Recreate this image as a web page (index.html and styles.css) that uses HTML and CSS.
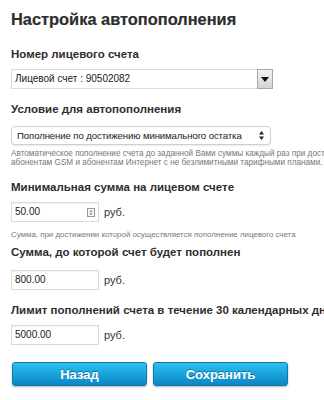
FILE: index.html
```html
<!DOCTYPE html>
<html lang="ru">
<head>
<meta charset="utf-8">
<title>Настройка автопополнения</title>
<link rel="stylesheet" href="styles.css">
</head>
<body>
<div class="page">
  <h1 class="title">Настройка автопополнения</h1>

  <h2 class="label first">Номер лицевого счета</h2>
  <div class="select-box">
    <span class="select-value">Лицевой счет : 90502082</span>
    <span class="select-btn"><svg width="8" height="5" viewBox="0 0 8 5"><path d="M0 0h8L4 5z" fill="#111"/></svg></span>
  </div>

  <h2 class="label">Условие для автопополнения</h2>
  <div class="select-round">
    <span class="select-value2">Пополнение по достижению минимального остатка</span>
    <svg class="updown" width="5" height="9" viewBox="0 0 5 9"><path d="M2.5 0L5 3.5H0z M2.5 9L0 5.5h5z" fill="#222"/></svg>
  </div>
  <p class="note"><span>Автоматическое пополнение счета до заданной Вами суммы каждый раз при достижении</span><span>абонентам GSM и абонентам Интернет с не безлимитными тарифными планами.</span></p>

  <h2 class="label after-note">Минимальная сумма на лицевом счете</h2>
  <div class="field">
    <div class="input">50.00<svg class="spin" width="8" height="9" viewBox="0 0 8 9"><rect x="0.5" y="0.5" width="7" height="8" fill="#f4f4f4" stroke="#999"/><path d="M4 2L5.5 3.8h-3z M4 7L2.5 5.2h3z" fill="#777"/></svg></div>
    <span class="unit">руб.</span>
  </div>
  <p class="hint">Сумма, при достижении которой осуществляется пополнение лицевого счета</p>

  <h2 class="label after-hint">Сумма, до которой счет будет пополнен</h2>
  <div class="field">
    <div class="input">800.00</div>
    <span class="unit">руб.</span>
  </div>

  <h2 class="label">Лимит пополнений счета в течение 30 календарных дней</h2>
  <div class="field">
    <div class="input">5000.00</div>
    <span class="unit">руб.</span>
  </div>

  <div class="buttons">
    <button class="btn">Назад</button>
    <button class="btn">Сохранить</button>
  </div>
</div>
</body>
</html>
```
FILE: styles.css
```css
html, body {
  margin: 0;
  padding: 0;
  background: #fff;
  overflow: hidden;
}
body {
  font-family: "Liberation Sans", Arial, sans-serif;
  color: #333;
  width: 324px;
  height: 400px;
}
.page {
  padding: 9px 0 0 11px;
}
.title {
  margin: 0;
  font-size: 16.4px;
  line-height: 20px;
  font-weight: bold;
  color: #2e2e2e;
  -webkit-text-stroke: 0.2px #2e2e2e;
}
.label {
  margin: 12px 0 0;
  font-size: 11.5px;
  line-height: 16px;
  font-weight: bold;
  color: #2e2e2e;
  white-space: nowrap;
}
.label.first { margin-top: 17px; }
.label + .select-box,
.label + .field { margin-top: 7px; }
.label + .select-round { margin-top: 9px; }

.select-box {
  box-sizing: border-box;
  width: 262px;
  height: 20px;
  border: 1px solid #dcdcdc;
  display: flex;
  align-items: stretch;
  background: #fff;
}
.select-value {
  flex: 1;
  font-size: 10px;
  line-height: 18px;
  padding-left: 3px;
  color: #222;
}
.select-btn {
  width: 16px;
  box-sizing: border-box;
  border: 1px solid #a9a9a9;
  background: linear-gradient(#f2f2f2, #d4d4d4);
  display: flex;
  align-items: center;
  justify-content: center;
  margin: -1px -1px -1px 0;
}

.select-round {
  box-sizing: border-box;
  width: 260px;
  height: 19px;
  border: 1px solid #d0d0d0;
  border-radius: 4px;
  box-shadow: 0 1px 1px rgba(0,0,0,0.08);
  display: flex;
  align-items: center;
  background: #fff;
  padding: 0 6px 0 5px;
}
.select-value2 {
  flex: 1;
  font-size: 9.6px;
  letter-spacing: -0.1px;
  color: #222;
  white-space: nowrap;
}
.note {
  margin: 5px 0 0;
  font-size: 8.2px;
  line-height: 8.5px;
  color: #777;
  white-space: nowrap;
}
.note span { display: block; }

.label.after-note { margin-top: 12px; }

.field {
  display: flex;
  align-items: center;
  gap: 5px;
}
.input {
  box-sizing: border-box;
  width: 88px;
  height: 20px;
  border: 1px solid #dadada;
  box-shadow: inset 0 1px 1px rgba(0,0,0,0.06);
  font-size: 10px;
  line-height: 18px;
  padding-left: 3px;
  color: #222;
  display: flex;
  align-items: center;
  justify-content: space-between;
  padding-right: 3px;
}
.spin { display: block; }
.unit {
  font-size: 11px;
  color: #333;
}
.hint {
  margin: 8px 0 0;
  font-size: 7.9px;
  line-height: 9px;
  color: #777;
  white-space: nowrap;
}
.label.after-hint { margin-top: 5px; }
.label.after-hint + .field { margin-top: 10px; }

.buttons {
  display: flex;
  gap: 6px;
  margin-top: 17px;
  padding-left: 1px;
}
.btn {
  box-sizing: border-box;
  width: 135px;
  height: 24px;
  border: 1px solid #1277ad;
  border-radius: 3px;
  background: linear-gradient(#2cc0f0, #0a86c6);
  color: #fff;
  font-family: "Liberation Sans", Arial, sans-serif;
  font-weight: bold;
  font-size: 13px;
  text-shadow: 0 -1px 0 rgba(0,0,0,0.35);
  box-shadow: 0 1px 2px rgba(0,0,0,0.3);
  padding: 0;
}
```
